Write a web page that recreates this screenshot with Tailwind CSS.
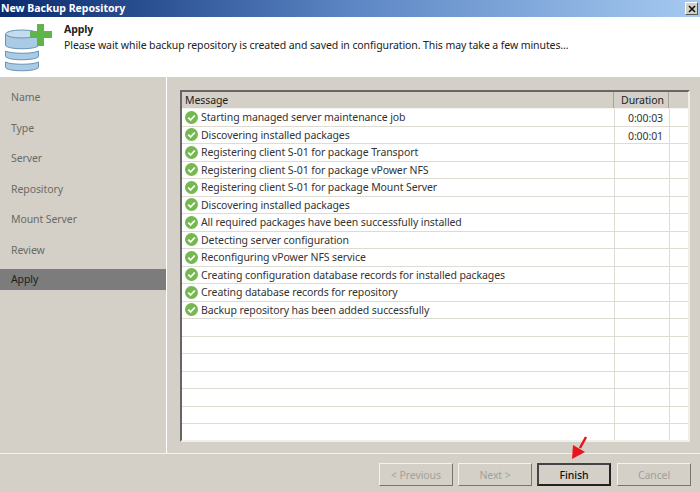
<!DOCTYPE html>
<html lang="en">
<head>
  <meta charset="UTF-8" />
  <title>New Backup Repository</title>
  <script src="https://cdn.jsdelivr.net/npm/@tailwindcss/browser@4"></script>
</head>
<body class="w-[700px] h-[492px] overflow-hidden bg-[#d4d0c8] font-['Noto_Sans',sans-serif] text-[10.5px] tracking-[-0.09px] text-[#333]">

  <!-- title bar -->
  <div class="h-[17px] flex items-center justify-between bg-gradient-to-r from-[#0a2a6e] via-[#5c86c4] to-[#a6caf0] pl-[1px] pr-[2px]">
    <span class="font-bold text-[10.5px] tracking-normal text-white leading-none">New Backup Repository</span>
    <span class="w-[13px] h-[13px] bg-[#d4d0c8] border-t border-l border-white border-r border-b border-r-[#555] border-b-[#555] flex items-center justify-center">
      <svg width="8" height="8" viewBox="0 0 8 8"><path d="M1 1 L7 7 M7 1 L1 7" stroke="#111" stroke-width="1.6"/></svg>
    </span>
  </div>

  <!-- header -->
  <div class="h-[60px] bg-white flex">
    <div class="w-[64px] shrink-0 pl-[5px] pt-[6px]">
      <svg width="48" height="49" viewBox="0 0 48 49">
        <path d="M0.500 39 V44 C0.500 49 33.500 49 33.500 44 V39 C28 42 6 42 0.500 39 Z" fill="#a9cbe6" stroke="#6a93b4"/>
        <path d="M0.500 28 V33 C0.500 38 33.500 38 33.500 33 V28 C28 31 6 31 0.500 28 Z" fill="#a9cbe6" stroke="#6a93b4"/>
        <path d="M0.500 11 V22 C0.500 27 33.500 27 33.500 22 V11 Z" fill="#a9cbe6" stroke="#6a93b4"/>
        <ellipse cx="17" cy="11" rx="16.500" ry="4" fill="#c4dcef" stroke="#6a93b4"/>
        <path d="M32 1 H39 V8 H47 V15 H39 V23 H32 V15 H25 V8 H32 Z" fill="#5fb548"/>
      </svg>
    </div>
    <div class="pt-[4px]">
      <div class="font-bold text-[#222] text-[10.5px] leading-[16px]">Apply</div>
      <div class="leading-[16px] text-[#222]">Please wait while backup repository is created and saved in configuration. This may take a few minutes...</div>
    </div>
  </div>

  <!-- main -->
  <div class="h-[377px] flex border-b border-b-[#f4f2ec]">
    <!-- wizard steps -->
    <div class="w-[166px] shrink-0 pt-[6px] text-[#6b6b66]">
      <div class="h-[30.500px] flex items-center pl-[11px]">Name</div>
      <div class="h-[30.500px] flex items-center pl-[11px]">Type</div>
      <div class="h-[30.500px] flex items-center pl-[11px]">Server</div>
      <div class="h-[30.500px] flex items-center pl-[11px]">Repository</div>
      <div class="h-[30.500px] flex items-center pl-[11px]">Mount Server</div>
      <div class="h-[30.500px] flex items-center pl-[11px]">Review</div>
      <div class="h-[21px] mt-[3px] flex items-center pl-[11px] bg-[#7c7c7c] text-[#1c1c1c]">Apply</div>
    </div>
    <div class="w-[1px] bg-white shrink-0"></div>

    <!-- log table -->
    <div class="pl-[13px] pt-[13px]">
      <div class="w-[510px] h-[352px] bg-white border-2 border-t-[#666] border-l-[#666] border-r-[#f0eee8] border-b-[#f0eee8] overflow-hidden" id="log">
        <div class="flex h-[17px] bg-[#d4d0c8] border-b border-b-[#f4f2ec] text-[#222]">
          <div class="w-[432px] pl-[3px] border-r border-r-[#a8a49c] leading-[16px]">Message</div>
          <div class="w-[55px] text-center pl-[3px] border-r border-r-[#a8a49c] leading-[16px]">Duration</div>
        </div>
        <!-- rows -->
        <div class="flex h-[17.500px] border-b border-b-[#dedbd3]"><div class="w-[433px] flex items-center pl-[3px] gap-[3px] border-r border-r-[#dedbd3]"><svg width="13" height="13" viewBox="0 0 13 13" class="shrink-0"><circle cx="6.500" cy="6.500" r="6.500" fill="#74b84f"/><path d="M3.300 6.700 L5.600 9 L9.800 4.500" fill="none" stroke="#fff" stroke-width="1.800"/></svg><span class="pt-[2px]">Starting managed server maintenance job</span></div><div class="w-[55px] text-right pr-[6px] leading-[18px] border-r border-r-[#dedbd3]">0:00:03</div></div>
        <div class="flex h-[17.500px] border-b border-b-[#dedbd3]"><div class="w-[433px] flex items-center pl-[3px] gap-[3px] border-r border-r-[#dedbd3]"><svg width="13" height="13" viewBox="0 0 13 13" class="shrink-0"><circle cx="6.500" cy="6.500" r="6.500" fill="#74b84f"/><path d="M3.300 6.700 L5.600 9 L9.800 4.500" fill="none" stroke="#fff" stroke-width="1.800"/></svg><span class="pt-[2px]">Discovering installed packages</span></div><div class="w-[55px] text-right pr-[6px] leading-[18px] border-r border-r-[#dedbd3]">0:00:01</div></div>
        <div class="flex h-[17.500px] border-b border-b-[#dedbd3]"><div class="w-[433px] flex items-center pl-[3px] gap-[3px] border-r border-r-[#dedbd3]"><svg width="13" height="13" viewBox="0 0 13 13" class="shrink-0"><circle cx="6.500" cy="6.500" r="6.500" fill="#74b84f"/><path d="M3.300 6.700 L5.600 9 L9.800 4.500" fill="none" stroke="#fff" stroke-width="1.800"/></svg><span class="pt-[2px]">Registering client S-01 for package Transport</span></div><div class="w-[55px] border-r border-r-[#dedbd3]"></div></div>
        <div class="flex h-[17.500px] border-b border-b-[#dedbd3]"><div class="w-[433px] flex items-center pl-[3px] gap-[3px] border-r border-r-[#dedbd3]"><svg width="13" height="13" viewBox="0 0 13 13" class="shrink-0"><circle cx="6.500" cy="6.500" r="6.500" fill="#74b84f"/><path d="M3.300 6.700 L5.600 9 L9.800 4.500" fill="none" stroke="#fff" stroke-width="1.800"/></svg><span class="pt-[2px]">Registering client S-01 for package vPower NFS</span></div><div class="w-[55px] border-r border-r-[#dedbd3]"></div></div>
        <div class="flex h-[17.500px] border-b border-b-[#dedbd3]"><div class="w-[433px] flex items-center pl-[3px] gap-[3px] border-r border-r-[#dedbd3]"><svg width="13" height="13" viewBox="0 0 13 13" class="shrink-0"><circle cx="6.500" cy="6.500" r="6.500" fill="#74b84f"/><path d="M3.300 6.700 L5.600 9 L9.800 4.500" fill="none" stroke="#fff" stroke-width="1.800"/></svg><span class="pt-[2px]">Registering client S-01 for package Mount Server</span></div><div class="w-[55px] border-r border-r-[#dedbd3]"></div></div>
        <div class="flex h-[17.500px] border-b border-b-[#dedbd3]"><div class="w-[433px] flex items-center pl-[3px] gap-[3px] border-r border-r-[#dedbd3]"><svg width="13" height="13" viewBox="0 0 13 13" class="shrink-0"><circle cx="6.500" cy="6.500" r="6.500" fill="#74b84f"/><path d="M3.300 6.700 L5.600 9 L9.800 4.500" fill="none" stroke="#fff" stroke-width="1.800"/></svg><span class="pt-[2px]">Discovering installed packages</span></div><div class="w-[55px] border-r border-r-[#dedbd3]"></div></div>
        <div class="flex h-[17.500px] border-b border-b-[#dedbd3]"><div class="w-[433px] flex items-center pl-[3px] gap-[3px] border-r border-r-[#dedbd3]"><svg width="13" height="13" viewBox="0 0 13 13" class="shrink-0"><circle cx="6.500" cy="6.500" r="6.500" fill="#74b84f"/><path d="M3.300 6.700 L5.600 9 L9.800 4.500" fill="none" stroke="#fff" stroke-width="1.800"/></svg><span class="pt-[2px]">All required packages have been successfully installed</span></div><div class="w-[55px] border-r border-r-[#dedbd3]"></div></div>
        <div class="flex h-[17.500px] border-b border-b-[#dedbd3]"><div class="w-[433px] flex items-center pl-[3px] gap-[3px] border-r border-r-[#dedbd3]"><svg width="13" height="13" viewBox="0 0 13 13" class="shrink-0"><circle cx="6.500" cy="6.500" r="6.500" fill="#74b84f"/><path d="M3.300 6.700 L5.600 9 L9.800 4.500" fill="none" stroke="#fff" stroke-width="1.800"/></svg><span class="pt-[2px]">Detecting server configuration</span></div><div class="w-[55px] border-r border-r-[#dedbd3]"></div></div>
        <div class="flex h-[17.500px] border-b border-b-[#dedbd3]"><div class="w-[433px] flex items-center pl-[3px] gap-[3px] border-r border-r-[#dedbd3]"><svg width="13" height="13" viewBox="0 0 13 13" class="shrink-0"><circle cx="6.500" cy="6.500" r="6.500" fill="#74b84f"/><path d="M3.300 6.700 L5.600 9 L9.800 4.500" fill="none" stroke="#fff" stroke-width="1.800"/></svg><span class="pt-[2px]">Reconfiguring vPower NFS service</span></div><div class="w-[55px] border-r border-r-[#dedbd3]"></div></div>
        <div class="flex h-[17.500px] border-b border-b-[#dedbd3]"><div class="w-[433px] flex items-center pl-[3px] gap-[3px] border-r border-r-[#dedbd3]"><svg width="13" height="13" viewBox="0 0 13 13" class="shrink-0"><circle cx="6.500" cy="6.500" r="6.500" fill="#74b84f"/><path d="M3.300 6.700 L5.600 9 L9.800 4.500" fill="none" stroke="#fff" stroke-width="1.800"/></svg><span class="pt-[2px]">Creating configuration database records for installed packages</span></div><div class="w-[55px] border-r border-r-[#dedbd3]"></div></div>
        <div class="flex h-[17.500px] border-b border-b-[#dedbd3]"><div class="w-[433px] flex items-center pl-[3px] gap-[3px] border-r border-r-[#dedbd3]"><svg width="13" height="13" viewBox="0 0 13 13" class="shrink-0"><circle cx="6.500" cy="6.500" r="6.500" fill="#74b84f"/><path d="M3.300 6.700 L5.600 9 L9.800 4.500" fill="none" stroke="#fff" stroke-width="1.800"/></svg><span class="pt-[2px]">Creating database records for repository</span></div><div class="w-[55px] border-r border-r-[#dedbd3]"></div></div>
        <div class="flex h-[17.500px] border-b border-b-[#dedbd3]"><div class="w-[433px] flex items-center pl-[3px] gap-[3px] border-r border-r-[#dedbd3]"><svg width="13" height="13" viewBox="0 0 13 13" class="shrink-0"><circle cx="6.500" cy="6.500" r="6.500" fill="#74b84f"/><path d="M3.300 6.700 L5.600 9 L9.800 4.500" fill="none" stroke="#fff" stroke-width="1.800"/></svg><span class="pt-[2px]">Backup repository has been added successfully</span></div><div class="w-[55px] border-r border-r-[#dedbd3]"></div></div>
        <!-- empty rows -->
        <div class="flex h-[17.500px] border-b border-b-[#dedbd3]"><div class="w-[433px] border-r border-r-[#dedbd3]"></div><div class="w-[55px] border-r border-r-[#dedbd3]"></div></div>
        <div class="flex h-[17.500px] border-b border-b-[#dedbd3]"><div class="w-[433px] border-r border-r-[#dedbd3]"></div><div class="w-[55px] border-r border-r-[#dedbd3]"></div></div>
        <div class="flex h-[17.500px] border-b border-b-[#dedbd3]"><div class="w-[433px] border-r border-r-[#dedbd3]"></div><div class="w-[55px] border-r border-r-[#dedbd3]"></div></div>
        <div class="flex h-[17.500px] border-b border-b-[#dedbd3]"><div class="w-[433px] border-r border-r-[#dedbd3]"></div><div class="w-[55px] border-r border-r-[#dedbd3]"></div></div>
        <div class="flex h-[17.500px] border-b border-b-[#dedbd3]"><div class="w-[433px] border-r border-r-[#dedbd3]"></div><div class="w-[55px] border-r border-r-[#dedbd3]"></div></div>
        <div class="flex h-[17.500px] border-b border-b-[#dedbd3]"><div class="w-[433px] border-r border-r-[#dedbd3]"></div><div class="w-[55px] border-r border-r-[#dedbd3]"></div></div>
        <div class="flex h-[17.500px] border-b border-b-[#dedbd3]"><div class="w-[433px] border-r border-r-[#dedbd3]"></div><div class="w-[55px] border-r border-r-[#dedbd3]"></div></div>
      </div>
    </div>
  </div>

  <!-- footer buttons -->
  <div class="relative flex justify-end gap-[5px] pt-[9px] pr-[9px]">
    <div class="w-[74px] h-[23px] pt-[2px] flex items-center justify-center text-[#a3a098] border border-t-[#f4f2ec] border-l-[#f4f2ec] border-r-[#77746c] border-b-[#77746c]">&lt; Previous</div>
    <div class="w-[74px] h-[23px] pt-[2px] flex items-center justify-center text-[#a3a098] border border-t-[#f4f2ec] border-l-[#f4f2ec] border-r-[#77746c] border-b-[#77746c]">Next &gt;</div>
    <div class="w-[74px] h-[23px] pt-[2px] flex items-center justify-center text-[#111] font-medium border-2 border-t-[#444] border-l-[#444] border-r-[#222] border-b-[#222]">Finish</div>
    <div class="w-[74px] h-[23px] pt-[2px] ml-[1px] flex items-center justify-center text-[#a3a098] border border-t-[#f4f2ec] border-l-[#f4f2ec] border-r-[#77746c] border-b-[#77746c]">Cancel</div>
    <!-- red arrow annotation -->
    <svg class="absolute left-[570px] top-[-19px]" width="20" height="28" viewBox="0 0 20 28"><path d="M16 2 L10 13" stroke="#e8141c" stroke-width="2.500"/><path d="M2 24 L15 17 L3 10 Z" fill="#e8141c"/></svg>
  </div>

</body>
</html>
